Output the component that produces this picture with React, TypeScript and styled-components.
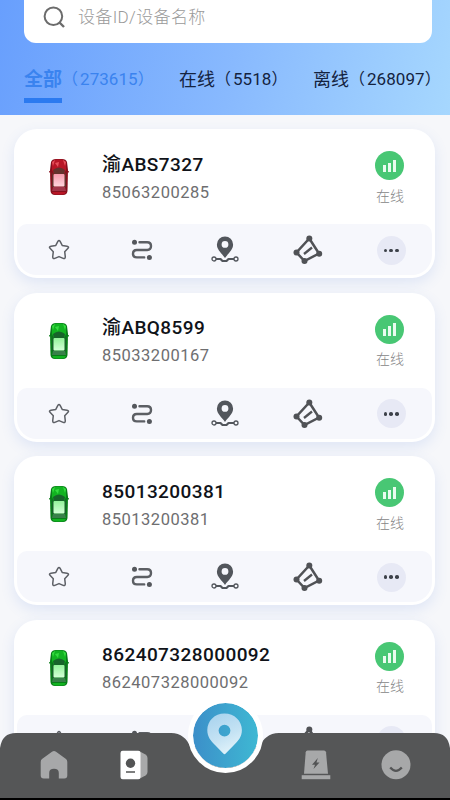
import React from 'react';
import styled, { createGlobalStyle } from 'styled-components';

const GlobalStyle = createGlobalStyle`
  * { box-sizing: border-box; }
  body { margin: 0; font-family: Roboto, "Noto Sans CJK SC", sans-serif; }
`;

const Screen = styled.div`
  position: relative;
  width: 450px;
  height: 800px;
  overflow: hidden;
  background: #f6f7fa;
`;

const Header = styled.header`
  height: 115px;
  padding: 0 18px 0 24px;
  background: linear-gradient(102deg, #689ffd 0%, #88b9fe 52%, #a6d7fe 100%);
`;

const SearchBox = styled.div`
  display: flex;
  align-items: center;
  height: 43px;
  padding: 0 0 9px 19px;
  gap: 12px;
  border-radius: 0 0 12px 12px;
  background: #fff;
  color: #9a9a9a;
  font-size: 17px;
  font-weight: 300;
  line-height: 24px;
  letter-spacing: 0.35px;
`;

const Tabs = styled.nav`
  display: flex;
  height: 60px;
  padding-top: 23px;
  white-space: nowrap;
`;

const Tab = styled.div<{ $active?: boolean; $width: number }>`
  display: flex;
  flex: none;
  width: ${(p) => p.$width}px;
  font-size: 17px;
  line-height: 26px;
  color: ${(p) => (p.$active ? '#3a83ef' : '#14233f')};
`;

const TabName = styled.span<{ $active?: boolean }>`
  height: 37px;
  padding-top: 1px;
  font-size: ${(p) => (p.$active ? 19 : 18)}px;
  letter-spacing: 0;
  font-weight: ${(p) => (p.$active ? 700 : 400)};
  border-bottom: 5px solid ${(p) => (p.$active ? '#2b7af0' : 'transparent')};
`;

const Paren = styled.span`
  font-size: 16px;
`;

const Count = styled.span`
  margin: 0 0 0 2px;
  letter-spacing: 0.05px;
`;

const List = styled.main`
  display: flex;
  flex-direction: column;
  gap: 14.4px;
  padding: 14.4px 15px 0 14px;
`;

const Card = styled.article`
  flex: none;
  height: 149px;
  padding: 0 3px 3px;
  border-radius: 23px;
  background: #fff;
  box-shadow: 0 5px 14px rgba(86, 126, 220, 0.14);
`;

const Summary = styled.div`
  display: flex;
  height: 95px;
  padding: 21.5px 25px 0 31px;
`;

const CarSlot = styled.div`
  width: 54px;
  padding-top: 7.5px;
`;

const Names = styled.div`
  flex: 1;
`;

const Title = styled.div`
  font-size: 19px;
  font-weight: 500;
  line-height: 28px;
  letter-spacing: 0.42px;
  color: #101319;
`;

const DeviceId = styled.div`
  font-size: 16.5px;
  line-height: 28px;
  letter-spacing: 0.5px;
  color: #6e6e70;
`;

const Status = styled.div`
  display: flex;
  flex-direction: column;
  align-items: center;
  width: 34px;
  gap: 4.5px;
  color: #858587;
  font-size: 14px;
  font-weight: 300;
  line-height: 22px;
  white-space: nowrap;
`;

const Signal = styled.div`
  display: flex;
  align-items: flex-end;
  justify-content: center;
  width: 29px;
  height: 29px;
  margin: 0.5px 1px 0 0;
  padding-bottom: 8px;
  gap: 2px;
  border-radius: 50%;
  background: #48c774;
`;

const SignalBar = styled.i<{ $h: number }>`
  width: 2.7px;
  height: ${(p) => p.$h}px;
  background: #e9fbef;
`;

const Actions = styled.div`
  display: grid;
  grid-template-columns: repeat(5, 1fr);
  align-items: center;
  justify-items: center;
  height: 51px;
  padding-top: 1px;
  border-radius: 10px 10px 20px 20px;
  background: #f6f7fc;
`;

const More = styled.div`
  display: flex;
  align-items: center;
  justify-content: center;
  gap: 2px;
  width: 29px;
  height: 29px;
  margin-left: 1.5px;
  border-radius: 50%;
  background: #e7e9f5;
`;

const Dot = styled.i`
  width: 3.6px;
  height: 3.6px;
  border-radius: 50%;
  background: #3c4149;
`;

const BottomNav = styled.footer`
  position: absolute;
  left: 0;
  bottom: 0;
  width: 450px;
  height: 67px;
  border-bottom: 2px solid #000;
`;

const NavSurface = styled.div`
  display: grid;
  grid-template-columns: 107px 54px 127.5px 54px 107px;
  justify-items: center;
  height: 65px;
  padding-top: 17px;
  background: #555657;
  clip-path: path('M0 65 V15 Q2 0 16 0 H171 C181 0 187 6 190 13 H260 C263 6 269 0 279 0 H434 Q448 0 450 15 V65 Z');
`;

const Locate = styled.div`
  position: absolute;
  left: 187.5px;
  bottom: 25px;
  width: 75px;
  height: 75px;
  border: 5.5px solid #fff;
  border-radius: 50%;
  background: linear-gradient(90deg, #3c8fc9, #3eb8d3);
  background-clip: padding-box;
  background-color: #fff;
`;

const Pad = styled.div<{ $col: number }>`
  grid-column: ${(p) => p.$col};
  grid-row: 1;
`;

const SearchIcon = () => (
  <svg width="23" height="23" viewBox="0 0 23 23" fill="none" stroke="#6c6c6c" strokeWidth="2">
    <circle cx="10.4" cy="10.2" r="8.8" />
    <path d="M16.5 16.5 21 21" strokeWidth="2.4" />
  </svg>
);

const palettes = {
  red: { body: '#b81626', light: '#e8525c', edge: '#86101d', roof: '#f59aad', roofEnd: '#ffd5dc', glass: '#64322d', rear: '#a13649' },
  green: { body: '#12b321', light: '#35dc40', edge: '#087d18', roof: '#93f29a', roofEnd: '#d4ffd7', glass: '#17642a', rear: '#39804a' },
};
type CarColor = keyof typeof palettes;

const Car = ({ color }: { color: CarColor }) => {
  const c = palettes[color];
  const id = `roof-${color}`;
  return (
    <svg width="22" height="38" viewBox="0 0 22 38">
      <defs>
        <linearGradient id={id} x1="0" y1="0" x2="0" y2="1">
          <stop offset="0" stopColor={c.roof} />
          <stop offset="1" stopColor={c.roofEnd} />
        </linearGradient>
      </defs>
      <path d="M1 13.5 4 11.5 V14 L1 14.5ZM21 13.5 18 11.5 V14 L21 14.5Z" fill={c.edge} />
      <path d="M3 4Q4 1 8 1H14Q18 1 19 4L20 12 19.5 33Q19 37 15 37H7Q3 37 2.5 33L2 12Z" fill={c.edge} />
      <path d="M4 5Q5 1.5 9 1.5H13Q17 1.5 18 5V12L16 16H6L4 12Z" fill={c.body} />
      <path d="M4 4 7 2 5 8ZM18 4 15 2 17 8ZM7 5 11 4 10 9Z" fill={c.light} />
      <path d="M5 12Q11 7 17 12L16 17H6Z" fill={c.glass} />
      <path d="M4 14 6 18V29H4ZM18 14 16 18V29H18Z" fill={c.glass} />
      <rect x="5.5" y="16" width="11" height="12.5" rx="1" fill={`url(#${id})`} />
      <path d="M5 29H17L18 33H4Z" fill={c.rear} />
      <path d="M4 34H18Q17 36.5 14 36.5H8Q5 36.5 4 34Z" fill={c.body} />
    </svg>
  );
};

const StarIcon = () => (
  <svg width="22" height="22" viewBox="0 0 22 22" fill="none" stroke="#5d6066" strokeWidth="1.5" strokeLinejoin="round">
    <path d="M10 2.2Q11 .8 12 2.2L14.2 6.4 19 7.3Q21.4 7.8 20 9.3L16.7 12.7 17.3 17.8Q17.3 20.2 15.2 19.4L11 17.6 6.8 19.4Q4.7 20.2 4.7 17.8L5.3 12.7 2 9.3Q.6 7.8 3 7.3L7.8 6.4Z" />
  </svg>
);

const RouteIcon = () => (
  <svg width="22" height="22" viewBox="0 0 22 22">
    <path d="M8.5 3.3H16.2Q20 3.3 20 7.1T16.2 11H5.8Q2 11 2 14.7T5.8 18.4H13.2" fill="none" stroke="#5c5f64" strokeWidth="2.4" strokeLinecap="round" />
    <circle cx="3.5" cy="3.3" r="2.5" fill="#54575c" />
    <circle cx="18.4" cy="18.5" r="2.5" fill="#54575c" />
  </svg>
);

const TrackPinIcon = () => (
  <svg width="28" height="28" viewBox="0 0 28 28">
    <g fill="none" stroke="#52565c">
      <path d="M5 23H9.5L11.5 25H15.5L17.5 23H23" strokeWidth="2.2" strokeLinejoin="round" />
      <circle cx="3" cy="23" r="2" strokeWidth="1.3" />
      <circle cx="25" cy="23" r="2" strokeWidth="1.3" />
    </g>
    <path fillRule="evenodd" d="M14 .5A8.1 8.1 0 0 0 5.9 8.6C5.9 14 10.5 17 14 22C17.5 17 22.1 14 22.1 8.6A8.1 8.1 0 0 0 14 .5ZM14 5A3.4 3.4 0 1 1 14 11.8 3.4 3.4 0 0 1 14 5Z" fill="#52565c" />
  </svg>
);

const FenceIcon = () => (
  <svg width="30" height="30" viewBox="0 0 30 30" fill="#505256">
    <path d="M16.3 3.5 26 18.5 11.5 26 3.5 17.5Z" fill="none" stroke="#505256" strokeWidth="2.5" />
    <path d="M11 19 19 12.5" stroke="#505256" strokeWidth="2.3" />
    <circle cx="16.3" cy="3.6" r="3" />
    <circle cx="26.2" cy="18.7" r="3" />
    <circle cx="11.5" cy="26" r="3" />
    <circle cx="3.5" cy="17.5" r="3" />
  </svg>
);

const HomeIcon = () => (
  <svg width="28" height="30" viewBox="0 0 28 30">
    <path d="M12 1.8Q14 .2 16 1.8L26 9Q27.3 10 27.3 12V25.5Q27.3 28.5 24.3 28.5H18.8V23Q18.8 18.8 14 18.8T9.2 23V28.5H3.7Q.7 28.5 .7 25.5V12Q.7 10 2 9Z" fill="#a7a8a9" />
  </svg>
);

const DeviceIcon = () => (
  <svg width="28" height="30" viewBox="0 0 28 30">
    <path d="M19 1 25.5 4.5Q27.5 5.7 27.5 8V22Q27.5 24.3 25.5 25.5L19 29Z" fill="#a8a9aa" />
    <rect x=".5" y=".8" width="20" height="28.4" rx="2.2" fill="#fff" />
    <circle cx="10.5" cy="13.2" r="4.7" fill="#535455" />
    <path d="M6 22H15" stroke="#535455" strokeWidth="1.5" />
  </svg>
);

const AlarmIcon = () => (
  <svg width="30" height="30" viewBox="0 0 30 30">
    <path d="M6.5.5H23Q24.8.5 25 2.3L27 23.8H3L4.7 2.3Q4.9.5 6.5.5Z" fill="#a7a8a9" />
    <path d="M.7 25.2H29.3V29.2H.7Z" fill="#a7a8a9" />
    <path d="M16.8 8 11 14.8H14L12.5 19 18.5 12.5H15.5Z" fill="#535455" />
  </svg>
);

const SmileIcon = () => (
  <svg width="30" height="30" viewBox="0 0 30 30">
    <circle cx="15" cy="14.7" r="14.5" fill="#a7a8a9" />
    <path d="M9.2 17.6Q15 24.2 20.8 17.6" fill="none" stroke="#535455" strokeWidth="2.3" />
  </svg>
);

const LocateIcon = () => (
  <svg width="64" height="64" viewBox="0 0 64 64">
    <defs>
      <linearGradient id="locate-pin" x1="0.2" y1="0" x2="0.6" y2="1">
        <stop offset="0" stopColor="#a9d3ee" />
        <stop offset=".6" stopColor="#c5e3f4" />
        <stop offset="1" stopColor="#e2f3fa" />
      </linearGradient>
    </defs>
    <path fillRule="evenodd" d="M31.5 10.5C21.5 10.5 14.3 18 14.3 27C14.3 34 18 38 22 42L30.3 50.6Q31.5 51.8 32.7 50.6L41 42C45 38 48.9 34 48.9 27C48.9 18 41.5 10.5 31.5 10.5ZM31.5 21.7A5.9 5.9 0 1 1 31.5 33.5 5.9 5.9 0 0 1 31.5 21.7Z" fill="url(#locate-pin)" />
  </svg>
);

const devices: { title: string; id: string; color: CarColor }[] = [
  { title: '渝ABS7327', id: '85063200285', color: 'red' },
  { title: '渝ABQ8599', id: '85033200167', color: 'green' },
  { title: '85013200381', id: '85013200381', color: 'green' },
  { title: '862407328000092', id: '862407328000092', color: 'green' },
];

const tabs = [
  { name: '全部', count: '273615', width: 155, active: true },
  { name: '在线', count: '5518', width: 134 },
  { name: '离线', count: '268097', width: 130 },
];

export default function App() {
  return (
    <>
      <GlobalStyle />
      <Screen>
        <Header>
          <SearchBox>
            <SearchIcon />
            <span>设备ID/设备名称</span>
          </SearchBox>
          <Tabs>
            {tabs.map((t) => (
              <Tab key={t.name} $active={t.active} $width={t.width}>
                <TabName $active={t.active}>{t.name}</TabName>
                <Paren>（</Paren>
                <Count>{t.count}</Count>
                <Paren>）</Paren>
              </Tab>
            ))}
          </Tabs>
        </Header>
        <List>
          {devices.map((d) => (
            <Card key={d.title}>
              <Summary>
                <CarSlot>
                  <Car color={d.color} />
                </CarSlot>
                <Names>
                  <Title>{d.title}</Title>
                  <DeviceId>{d.id}</DeviceId>
                </Names>
                <Status>
                  <Signal>
                    <SignalBar $h={7} />
                    <SignalBar $h={9.5} />
                    <SignalBar $h={12.5} />
                  </Signal>
                  在线
                </Status>
              </Summary>
              <Actions>
                <StarIcon />
                <RouteIcon />
                <TrackPinIcon />
                <FenceIcon />
                <More>
                  <Dot />
                  <Dot />
                  <Dot />
                </More>
              </Actions>
            </Card>
          ))}
        </List>
        <BottomNav>
          <NavSurface>
            <Pad $col={1}><HomeIcon /></Pad>
            <Pad $col={2}><DeviceIcon /></Pad>
            <Pad $col={4}><AlarmIcon /></Pad>
            <Pad $col={5}><SmileIcon /></Pad>
          </NavSurface>
          <Locate>
            <LocateIcon />
          </Locate>
        </BottomNav>
      </Screen>
    </>
  );
}
